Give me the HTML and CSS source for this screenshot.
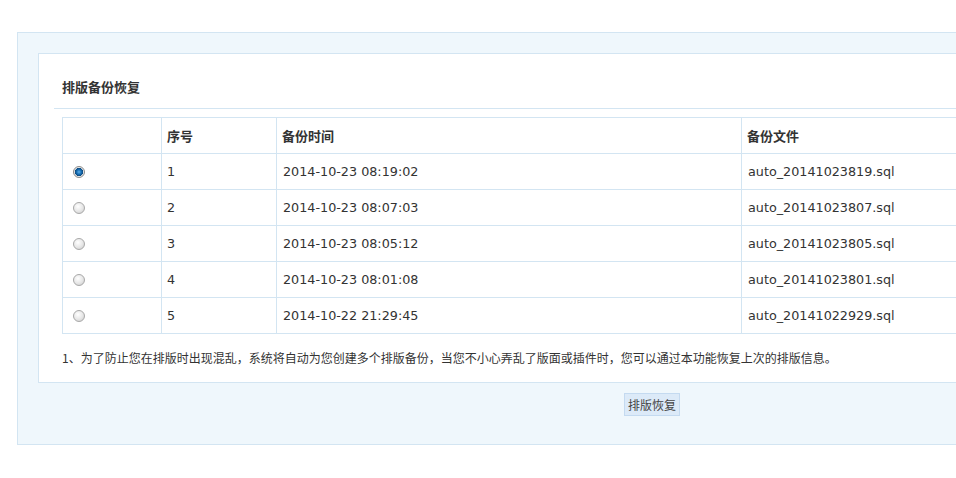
FILE: index.html
```html
<!DOCTYPE html>
<html lang="zh-CN">
<head>
<meta charset="utf-8">
<title>排版备份恢复</title>
<link rel="stylesheet" href="styles.css">
</head>
<body>
<div class="page">
  <div class="frame">
    <div class="panel">
      <h3 class="panel-title">排版备份恢复</h3>
      <table class="backup-table">
        <thead>
          <tr>
            <th class="col-sel"></th>
            <th class="col-no">序号</th>
            <th class="col-time">备份时间</th>
            <th class="col-file">备份文件</th>
          </tr>
        </thead>
        <tbody>
          <tr>
            <td><input type="radio" name="backup" class="radio" checked></td>
            <td>1</td>
            <td>2014-10-23 08:19:02</td>
            <td>auto_20141023819.sql</td>
          </tr>
          <tr>
            <td><input type="radio" name="backup" class="radio"></td>
            <td>2</td>
            <td>2014-10-23 08:07:03</td>
            <td>auto_20141023807.sql</td>
          </tr>
          <tr>
            <td><input type="radio" name="backup" class="radio"></td>
            <td>3</td>
            <td>2014-10-23 08:05:12</td>
            <td>auto_20141023805.sql</td>
          </tr>
          <tr>
            <td><input type="radio" name="backup" class="radio"></td>
            <td>4</td>
            <td>2014-10-23 08:01:08</td>
            <td>auto_20141023801.sql</td>
          </tr>
          <tr>
            <td><input type="radio" name="backup" class="radio"></td>
            <td>5</td>
            <td>2014-10-22 21:29:45</td>
            <td>auto_20141022929.sql</td>
          </tr>
        </tbody>
      </table>
      <p class="note">1、为了防止您在排版时出现混乱，系统将自动为您创建多个排版备份，当您不小心弄乱了版面或插件时，您可以通过本功能恢复上次的排版信息。</p>
    </div>
    <div class="actions">
      <button type="button" class="btn">排版恢复</button>
    </div>
  </div>
</div>
</body>
</html>
```

FILE: styles.css
```css
html, body {
  margin: 0;
  padding: 0;
  background: #ffffff;
  overflow: hidden;
}

body {
  font-family: "DejaVu Sans", "Noto Sans CJK SC", sans-serif;
  font-size: 12px;
  color: #333333;
}

.page {
  padding: 32px 0 0 17px;
}

.frame {
  width: 1270px;
  background: #eff7fc;
  border: 1px solid #d3e5f2;
  padding: 20px 20px 0 20px;
  box-sizing: border-box;
}

.panel {
  background: #ffffff;
  border: 1px solid #d3e5f2;
  padding: 15px 0 0 15px;
}

.panel-title {
  margin: 0;
  padding: 9px 8px 13px 8px;
  line-height: 17px;
  font-family: "Noto Sans CJK SC", sans-serif;
  font-size: 13px;
  font-weight: bold;
  color: #333333;
  border-bottom: 1px solid #d3e5f2;
}

.backup-table {
  margin: 8px 0 0 8px;
  width: calc(100% - 8px);
  border-collapse: collapse;
}

.backup-table th,
.backup-table td {
  border: 1px solid #d3e5f2;
  height: 36px;
  padding: 0 0 0 5px;
  text-align: left;
  vertical-align: middle;
  box-sizing: border-box;
}

.backup-table th {
  font-family: "Noto Sans CJK SC", sans-serif;
  font-weight: bold;
  font-size: 13px;
}

.backup-table td {
  font-size: 12.75px;
}

.col-sel { width: 99px; }
.col-no { width: 115px; }
.col-time { width: 465px; }

.backup-table td:nth-child(3),
.backup-table td:nth-child(4) {
  padding-left: 6px;
}

.radio {
  -webkit-appearance: none;
  appearance: none;
  display: block;
  width: 12px;
  height: 12px;
  margin: 1px 0 0 5px;
  border-radius: 50%;
  border: 1px solid #a9a9a9;
  box-sizing: border-box;
  background: radial-gradient(circle at 40% 35%, #ffffff 0%, #e6e6e6 55%, #c8c8c8 100%);
}

.radio:checked {
  border-color: #8c8c8c;
  background:
    radial-gradient(circle at 50% 50%, #5fb2ec 0%, #1b72b8 30%, #0c4a80 55%, transparent 62%),
    radial-gradient(circle, #ffffff 0%, #dcdcdc 100%);
}

.note {
  margin: 0;
  padding: 15px 0 16px 8px;
  line-height: 17px;
  font-family: "Noto Sans CJK SC", sans-serif;
  font-size: 12px;
  color: #333333;
}

.actions {
  padding: 10px 0 28px 0;
  text-align: center;
}

.btn {
  display: inline-block;
  margin: 0;
  padding: 0 3px;
  height: 23px;
  line-height: 21px;
  font-family: "Noto Sans CJK SC", sans-serif;
  font-size: 12px;
  color: #444444;
  background: #dceaf8;
  border: 1px solid #c4daf0;
  border-radius: 0;
}
```
